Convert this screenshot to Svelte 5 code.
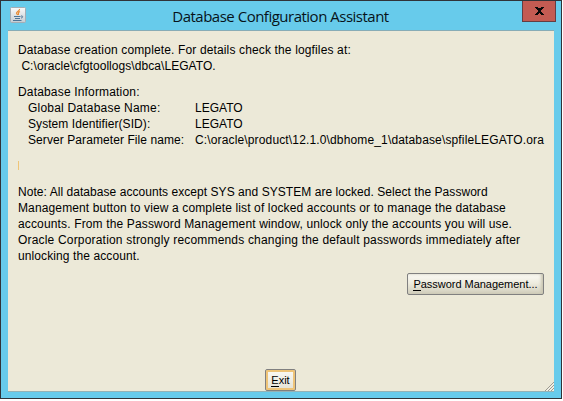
<script>
  const intro = [
    ['Database creation complete. For details check the logfiles at:', 0.14],
    ['\u00a0C:\\oracle\\cfgtoollogs\\dbca\\LEGATO.', 0.06]
  ];
  const info = [
    ['Global Database Name:', 'LEGATO', 0.21, 0],
    ['System Identifier(SID):', 'LEGATO', 0.07, 0],
    ['Server Parameter File name:', 'C:\\oracle\\product\\12.1.0\\dbhome_1\\database\\spfileLEGATO.ora', 0.08, 0.145]
  ];
  const note = [
    ['Note: All database accounts except SYS and SYSTEM are locked. Select the Password', 0.05],
    ['Management button to view a complete list of locked accounts or to manage the database', 0.127],
    ['accounts. From the Password Management window, unlock only the accounts you will use.', 0.147],
    ['Oracle Corporation strongly recommends changing the default passwords immediately after', 0.184],
    ['unlocking the account.', 0.1]
  ];
</script>

<div class="window">
  <header>
    <svg class="java" width="16" height="16" viewBox="0 0 16 16">
      <defs>
        <linearGradient id="tile" x1="0" y1="0" x2="0" y2="1">
          <stop offset="0" stop-color="#fafafa" />
          <stop offset="1" stop-color="#c4ccd3" />
        </linearGradient>
      </defs>
      <rect x=".5" y=".5" width="15" height="15" rx="1" fill="url(#tile)" stroke="#a4adb5" />
      <path d="M9.5 2C10 4 6 4.500 6.500 6.500L7.700 8M10 4.500C7.500 5.500 8.300 6.500 8.500 8" fill="none" stroke="#e88b35" stroke-width="1.200" />
      <path d="M4 9.500H10.500M5 11.500H10M3 13.500H11.500M11 9C13.500 8.500 13 11 11 11" fill="none" stroke="#4d7496" />
    </svg>
    <h1>Database Configuration Assistant</h1>
    <button class="close" aria-label="Close">
      <svg width="9" height="8" viewBox="0 0 9 8" shape-rendering="crispEdges">
        <path d="M0 0H3V1H6V0H9V1H8V2H7V3H6V5H7V6H8V7H9V8H6V7H5V6H4V7H3V8H0V7H1V6H2V5H3V3H2V2H1V1H0Z" fill="#080808" />
      </svg>
    </button>
  </header>

  <main>
    <section class="intro">
      {#each intro as [text, gap]}
        <p><span style:letter-spacing="{gap}px">{text}</span></p>
      {/each}
    </section>
    <section class="info">
      <p class="heading">Database Information:</p>
      {#each info as [label, value, lgap, vgap]}
        <p class="row">
          <span class="label" style:letter-spacing="{lgap}px">{label}</span>
          <span style:letter-spacing="{vgap}px">{value}</span>
        </p>
      {/each}
    </section>
    <div class="progress"></div>
    <section class="note">
      {#each note as [text, gap]}
        <p><span style:letter-spacing="{gap}px">{text}</span></p>
      {/each}
    </section>
    <button class="btn password"><u>P</u>assword Management...</button>
    <footer>
      <button class="btn exit"><u>E</u>xit</button>
    </footer>
    <svg class="grip" width="9" height="9" viewBox="0 0 9 9">
      <path d="M0 9L9 0M3 9L9 3M6 9L9 6" stroke="#9c9a90" />
      <path d="M1 9.500L9.500 1M4 9.500L9.500 4M7 9.500L9.500 7" stroke="#fff" stroke-width=".6" />
    </svg>
  </main>
</div>

<style>
  :global(body) {
    background: #fff;
  }
  .window {
    box-sizing: border-box;
    width: 562px;
    height: 399px;
    border: 1px solid #303338;
    background: #67cbeb;
    padding: 0 7px 6px 7px;
    display: flex;
    flex-direction: column;
    color: #000;
    font: 12px/16px 'Liberation Sans', Arial, sans-serif;
  }
  header {
    height: 29px;
    display: flex;
    align-items: flex-start;
  }
  .java {
    margin: 6px 0 0 2px;
  }
  h1 {
    flex: 1;
    margin: 4px 0 0 13px;
    font: 15px/22px 'Open Sans', 'Noto Sans', sans-serif;
    letter-spacing: -0.5px;
    text-align: center;
    white-space: nowrap;
    color: #07131a;
  }
  .close {
    box-sizing: border-box;
    width: 34px;
    height: 21px;
    margin-right: -2px;
    padding: 0;
    display: flex;
    align-items: center;
    justify-content: center;
    background: #c35b52;
    border: 1px solid #653d42;
    border-top: 0;
  }
  main {
    box-sizing: border-box;
    width: 546px;
    height: 362px;
    padding: 11px 10px 0;
    background: #ece9d8;
    border-top: 1px solid #87acb6;
    border-bottom: 1px solid #95b2b5;
    position: relative;
    display: flex;
    flex-direction: column;
  }
  p {
    margin: 0;
    height: 16px;
    white-space: nowrap;
  }
  .info {
    margin-top: 10px;
  }
  .heading {
    letter-spacing: 0.17px;
  }
  .row {
    display: flex;
    padding-left: 10px;
  }
  .label {
    width: 167px;
  }
  .progress {
    width: 1px;
    height: 9px;
    margin-top: 13px;
    background: #efc578;
  }
  .note {
    margin-top: 14px;
  }
  .btn {
    box-sizing: border-box;
    height: 22px;
    padding: 0;
    border: 1px solid #808080;
    border-radius: 2px;
    font: 11px/18px 'Liberation Sans', Arial, sans-serif;
    color: #000;
    white-space: nowrap;
    background: linear-gradient(#fbfaf6, #eeecdf 45%, #d0cdbb);
  }
  .btn u {
    text-decoration: none;
    box-shadow: 0 1px #000;
    display: inline-block;
    line-height: 12px;
  }
  .password {
    width: 137px;
    margin-top: 9px;
    align-self: flex-end;
    letter-spacing: -0.03px;
    box-shadow: inset -2px 0 3px #c9c6b2;
  }
  footer {
    margin-top: 74px;
    padding-right: 1px;
    display: flex;
    justify-content: center;
  }
  .exit {
    width: 31px;
    background: linear-gradient(#fbfaf6, #e4e2d4);
    box-shadow: inset 0 0 0 2px #eec478;
  }
  .grip {
    position: absolute;
    right: 0;
    bottom: 0;
  }
</style>
